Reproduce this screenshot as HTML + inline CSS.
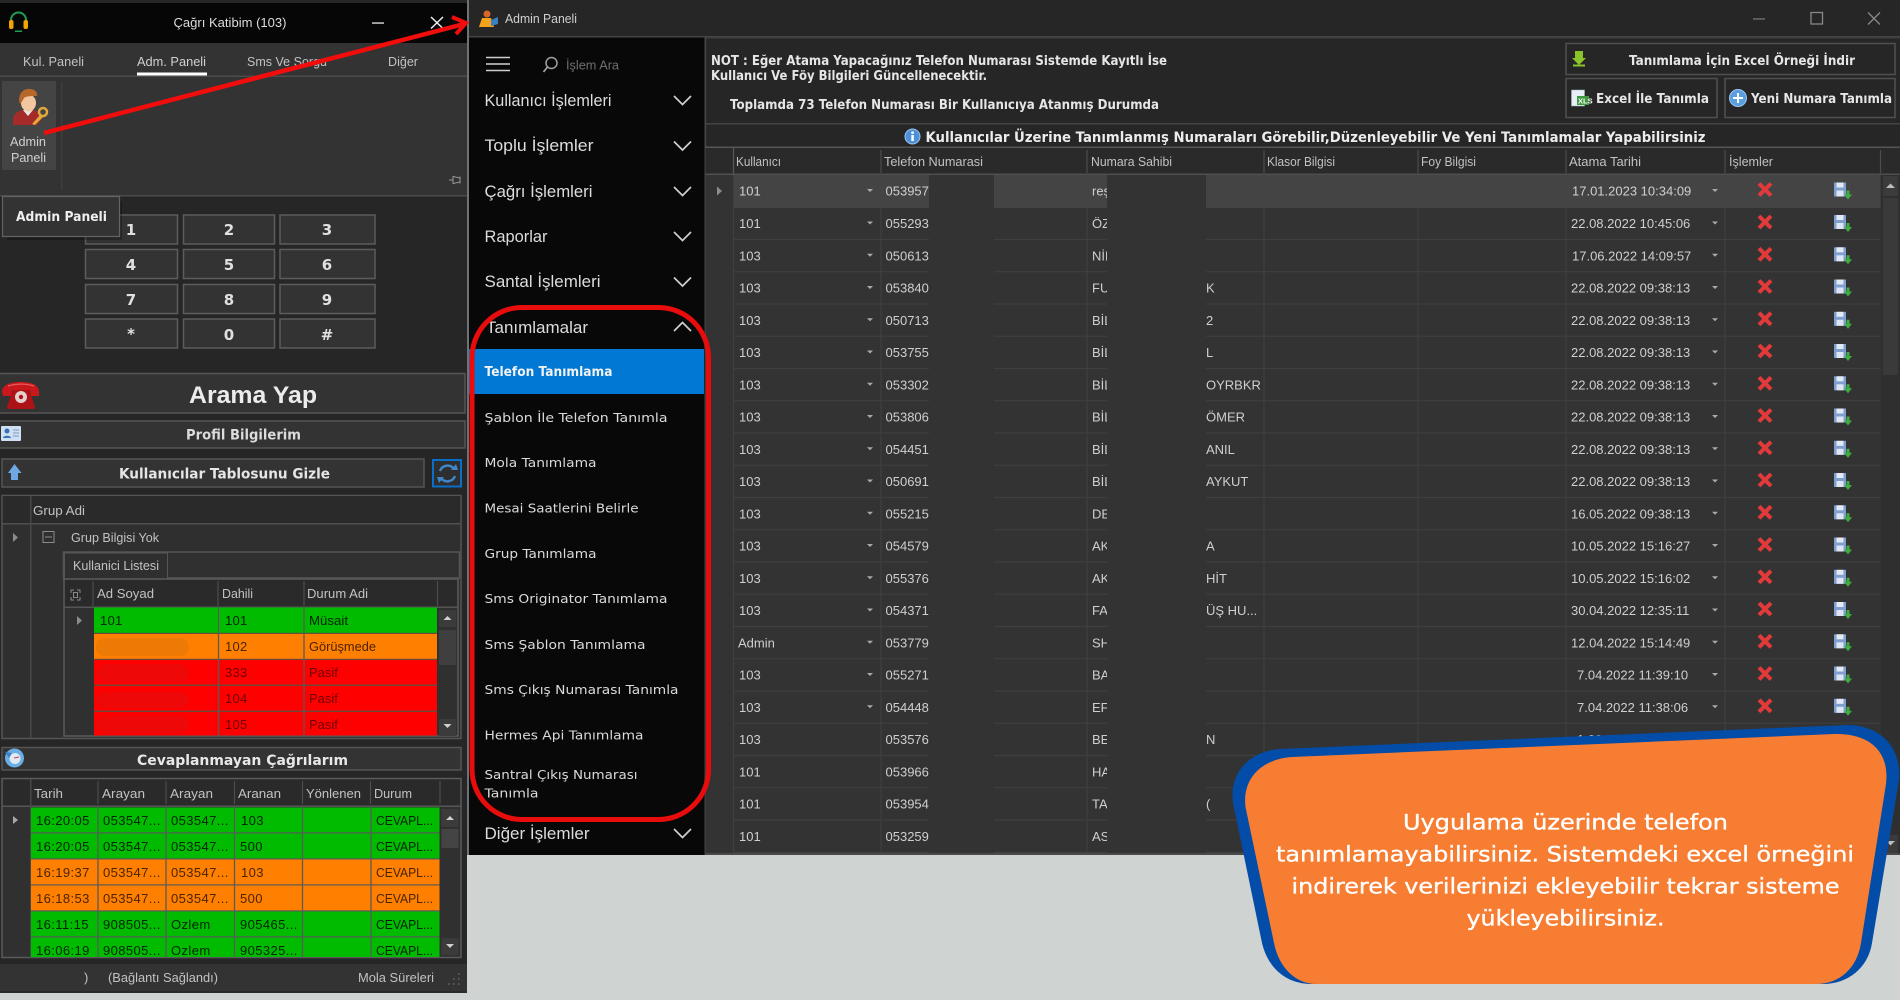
<!DOCTYPE html>
<html lang="tr"><head><meta charset="utf-8"><title>Admin Paneli</title>
<style>
html,body{margin:0;padding:0;background:#cfd3d2;overflow:hidden;width:1900px;height:1000px}
svg{display:block}
text{font-family:"Liberation Sans",sans-serif;font-size:13px;fill:#cdcdcd;white-space:pre}
.ui{filter:blur(.35px)}
.b{font-family:"DejaVu Sans",sans-serif;font-weight:700;font-size:13px;fill:#e6e6e6}
.k{font-family:"DejaVu Sans",sans-serif;font-weight:700;font-size:15px;fill:#e0e0e0;text-anchor:middle}
.m{font-size:17px;fill:#dcdcdc}
.s{font-family:"DejaVu Sans",sans-serif;font-size:12.5px;fill:#dadada}
.h{fill:#c2c2c2}
.d{fill:#cfcfcf;font-size:13px}
.g{fill:#012401;letter-spacing:.4px}
.o{fill:#4a2400;letter-spacing:.4px}
.r{fill:#6e0000;letter-spacing:.4px}
.w{font-family:"DejaVu Sans",sans-serif;font-size:21px;fill:#fff;stroke:#fff;stroke-width:.35px;text-anchor:start}
</style></head><body>
<svg width="1900" height="1000" viewBox="0 0 1900 1000" xmlns="http://www.w3.org/2000/svg">
<defs>
<g id="ri">
<path d="M867 -6.500h6l-3 3zM1712 -6.500h6l-3 3z" fill="#aaa"/>
<path d="M1759 -12l12 12M1771 -12l-12 12" stroke="#e23a3a" stroke-width="4" fill="none"/>
<rect x="1834" y="-13" width="12" height="14" fill="#7f9fd0"/><rect x="1836.500" y="-13" width="7" height="5" fill="#e4eaf4"/><rect x="1836.500" y="-5" width="7" height="6" fill="#dfe6f2"/>
<path d="M1844 -1h8l-4 5z M1846.500 -5h3v4h-3z" fill="#3fae3f"/>
</g>
<path id="cv" d="M674 -4l8.500 8.500l8.500-8.500" fill="none" stroke="#cfcfcf" stroke-width="1.700"/>
</defs>

<rect width="1900" height="1000" fill="#cfd3d2"/>

<g class="ui">
<!-- LEFT WINDOW -->
<rect x="0" y="0" width="467" height="993" fill="#262626"/>
<rect x="0" y="3" width="467" height="40" fill="#060606"/>
<path d="M11 22v-2a7.500 7.500 0 0 1 15 0v2" fill="none" stroke="#1d9e55" stroke-width="2"/>
<rect x="9" y="20" width="4.500" height="9" rx="2" fill="#f2a500"/><rect x="23.500" y="20" width="4.500" height="9" rx="2" fill="#f2a500"/>
<rect x="15" y="30.500" width="7" height="1.500" fill="#1d9e55"/>
<text x="173.500" y="27" textLength="113" lengthAdjust="spacingAndGlyphs" style="fill:#dcdcdc">Çağrı Katibim (103)</text>
<rect x="372" y="22.300" width="12" height="1.500" fill="#ccc"/>
<path d="M431 17l12 11.500M443 17l-12 11.500" stroke="#eee" stroke-width="1.500" fill="none"/>

<rect x="0" y="43" width="467" height="153" fill="#333"/>
<rect x="0" y="75.500" width="467" height="1.500" fill="#4b4b4b"/>
<rect x="0" y="195" width="467" height="1.500" fill="#4a4a4a"/>
<text class="h" x="23" y="66" textLength="61" lengthAdjust="spacingAndGlyphs">Kul. Paneli</text>
<text class="h" x="137" y="66" textLength="69" lengthAdjust="spacingAndGlyphs" style="fill:#d0d0d0">Adm. Paneli</text>
<rect x="137" y="72.500" width="70" height="3" fill="#fff"/>
<text class="h" x="247" y="66" textLength="80" lengthAdjust="spacingAndGlyphs">Sms Ve Sorgu</text>
<text class="h" x="388" y="66" textLength="30" lengthAdjust="spacingAndGlyphs">Diğer</text>

<rect x="2" y="81" width="54" height="89" fill="#444"/>
<rect x="61" y="82" width="1.500" height="108" fill="#3e3e3e"/>
<path d="M13 125v-6c0-5 5-8 10-9h10c4 1 8 4 9 9l-5 6z" fill="#a52b2b"/>
<path d="M23 110l5 6 5-6z" fill="#e8e8e8"/>
<ellipse cx="28.500" cy="103" rx="7.500" ry="8.500" fill="#f2c7a0"/>
<path d="M20 104c-3-9 3-16 10-15 5 0 8 4 7 7-5 0-11 0-13 2-1 2-2 4-4 6z" fill="#b8672a"/>
<circle cx="43" cy="112" r="4" fill="none" stroke="#e0a93a" stroke-width="2.500"/><path d="M40 115l-8 9 3 1 8-8" fill="#e0a93a"/>
<text class="h" x="10" y="146" textLength="36" lengthAdjust="spacingAndGlyphs" style="fill:#d0d0d0">Admin</text>
<text class="h" x="11" y="162" textLength="35" lengthAdjust="spacingAndGlyphs" style="fill:#d0d0d0">Paneli</text>
<path d="M449 180h4M453 176.500v7l7-1.500v-4zM460 176.500v7" stroke="#999" stroke-width="1" fill="none"/>

<!-- keypad -->
<g fill="#333" stroke="#5c5c5c" stroke-width="1.500">
<rect x="85.500" y="215" width="92" height="29"/><rect x="183.500" y="215" width="91" height="29"/><rect x="280" y="215" width="95" height="29"/>
<rect x="85.500" y="249.500" width="92" height="29"/><rect x="183.500" y="249.500" width="91" height="29"/><rect x="280" y="249.500" width="95" height="29"/>
<rect x="85.500" y="284.500" width="92" height="29"/><rect x="183.500" y="284.500" width="91" height="29"/><rect x="280" y="284.500" width="95" height="29"/>
<rect x="85.500" y="319" width="92" height="29"/><rect x="183.500" y="319" width="91" height="29"/><rect x="280" y="319" width="95" height="29"/>
</g>
<text class="k" x="131" y="235">1</text><text class="k" x="229" y="235">2</text><text class="k" x="327" y="235">3</text>
<text class="k" x="131" y="270">4</text><text class="k" x="229" y="270">5</text><text class="k" x="327" y="270">6</text>
<text class="k" x="131" y="305">7</text><text class="k" x="229" y="305">8</text><text class="k" x="327" y="305">9</text>
<text class="k" x="131" y="339">*</text><text class="k" x="229" y="340">0</text><text class="k" x="327" y="340">#</text>

<!-- tooltip -->
<rect x="7" y="201" width="115" height="39" fill="#000" opacity=".25"/>
<rect x="2.500" y="196.500" width="117" height="40" fill="#333" stroke="#636363" stroke-width="1.200"/>
<text class="b" x="16" y="221" textLength="91" lengthAdjust="spacingAndGlyphs" style="fill:#f0f0f0">Admin Paneli</text>

<!-- bars -->
<rect x="-2" y="373.500" width="467" height="39.500" fill="#333" stroke="#555" stroke-width="1.500"/>
<path d="M13 389h16l6 18c0 2-1 2-3 2H10c-2 0-3 0-3-2z" fill="#ad1216"/>
<path d="M2 392C2 384 12 382 21 382C30 382 39 384 39 392L39 396L31 396L30 390L12 390L11 396L3 396Z" fill="#c8181c"/>
<path d="M8 386c8-2.500 18-2.500 26 0" stroke="#e85a5a" stroke-width="1.200" fill="none"/>
<circle cx="21" cy="397" r="6" fill="#e3cfcf"/><circle cx="21" cy="397" r="2.200" fill="#ad1216"/>
<text x="189" y="403" textLength="128" lengthAdjust="spacingAndGlyphs" style="font-size:24px;font-weight:700;fill:#ececec">Arama Yap</text>

<rect x="-2" y="421" width="467" height="27" fill="#333" stroke="#555" stroke-width="1.500"/>
<rect x="1" y="426" width="20" height="15" rx="1" fill="#cfe0f5"/><circle cx="7" cy="431" r="2.500" fill="#3a6fb5"/><path d="M3 438c0-3 8-3 8 0z" fill="#3a6fb5"/><path d="M13 430h6M13 433h6M13 436h6" stroke="#7c98bf" stroke-width="1"/>
<text class="b" x="186" y="439.500" textLength="115" lengthAdjust="spacingAndGlyphs" style="font-size:14px;fill:#dcdcdc">Profil Bilgilerim</text>

<rect x="2" y="459" width="422" height="28" fill="#333" stroke="#555" stroke-width="1.500"/>
<path d="M14.500 464l7 9h-3.500v7h-7v-7H8z" fill="#6ea9e6"/>
<text class="b" x="119" y="478.500" textLength="211" lengthAdjust="spacingAndGlyphs" style="font-size:14px;fill:#e6e6e6">Kullanıcılar Tablosunu Gizle</text>
<rect x="433" y="460" width="28" height="26.500" fill="#2e2e2e" stroke="#0a6fc8" stroke-width="2"/>
<path d="M440 471a8 8 0 0 1 14-2M455 476a8 8 0 0 1-14 2" fill="none" stroke="#3f86c8" stroke-width="2.500"/><path d="M451 470h7l-2-6zM444 477h-7l2 6z" fill="#3f86c8"/>

<!-- group table -->
<rect x="2" y="495.500" width="459" height="243" fill="#2f2f2f" stroke="#555" stroke-width="1.500"/>
<rect x="2.700" y="496" width="457.500" height="27" fill="#2a2a2a"/>
<rect x="2" y="523" width="459" height="1.500" fill="#505050"/>
<rect x="30" y="496" width="1.500" height="242" fill="#484848"/>
<text class="h" x="33" y="515" textLength="52" lengthAdjust="spacingAndGlyphs">Grup Adi</text>
<path d="M13 533l5 4.500-5 4.500z" fill="#8c8c8c"/>
<rect x="43" y="531.500" width="11" height="11" fill="none" stroke="#8c8c8c"/><path d="M45 537h7" stroke="#8c8c8c"/>
<text class="h" x="71" y="542" textLength="88" lengthAdjust="spacingAndGlyphs">Grup Bilgisi Yok</text>
<rect x="63.500" y="552" width="396" height="26" fill="#303030" stroke="#555" stroke-width="1.500"/>
<rect x="64.500" y="553" width="103" height="27" fill="#2f2f2f" stroke="#555"/>
<rect x="65" y="576" width="102" height="4" fill="#2f2f2f"/>
<text class="h" x="73" y="570" textLength="86" lengthAdjust="spacingAndGlyphs">Kullanici Listesi</text>
<rect x="64" y="579" width="394" height="157" fill="#303030" stroke="#5a5a5a" stroke-width="1.500"/>
<rect x="65" y="580" width="392" height="26.500" fill="#2a2a2a"/>
<rect x="64" y="606.500" width="394" height="1.500" fill="#555"/>
<path d="M93 581v25M218 581v25M304 581v25M437.500 581v25" stroke="#4d4d4d" stroke-width="1.200"/>
<path d="M71 593v-3h3M77 590h3v3M80 597v3h-3M74 600h-3v-3" fill="none" stroke="#8a8a8a"/><rect x="73.500" y="592.500" width="4" height="5" fill="none" stroke="#8a8a8a"/>
<text class="h" x="97" y="598" textLength="57" lengthAdjust="spacingAndGlyphs">Ad Soyad</text>
<text class="h" x="222" y="598" textLength="31" lengthAdjust="spacingAndGlyphs">Dahili</text>
<text class="h" x="307" y="598" textLength="61" lengthAdjust="spacingAndGlyphs">Durum Adi</text>
<path d="M77 616l5 4.500-5 4.500z" fill="#8c8c8c"/>
<rect x="94" y="607.500" width="343" height="128" fill="#6a4a3a"/>
<rect x="94" y="607.500" width="343" height="25.300" fill="#00bb00"/>
<rect x="94" y="634" width="343" height="24.800" fill="#ff7f00"/>
<rect x="94" y="660" width="343" height="24.600" fill="#f00"/>
<rect x="94" y="686" width="343" height="24.600" fill="#f00"/>
<rect x="94" y="712" width="343" height="23.500" fill="#f00"/>
<path d="M218.500 607v129M304 607v129" stroke="#5a5a5a" stroke-width="1.300"/>
<rect x="96" y="638" width="93" height="18" rx="9" fill="#ec7a05"/>
<rect x="96" y="664" width="93" height="18" rx="9" fill="#ee0808"/>
<rect x="96" y="692" width="93" height="16" rx="8" fill="#ee0808"/>
<rect x="96" y="716" width="93" height="17" rx="8.500" fill="#ee0808"/>
<text class="g" x="100" y="625" style="letter-spacing:.3px">101</text><text class="g" x="225" y="625" style="letter-spacing:.3px">101</text><text class="g" x="309" y="625" textLength="39" lengthAdjust="spacingAndGlyphs" style="letter-spacing:0">Müsait</text>
<text class="o" x="225" y="651" style="letter-spacing:.3px">102</text><text class="o" x="309" y="651" textLength="67" lengthAdjust="spacingAndGlyphs" style="letter-spacing:0">Görüşmede</text>
<text class="r" x="225" y="677" style="letter-spacing:.3px">333</text><text class="r" x="309" y="677" style="letter-spacing:0">Pasif</text>
<text class="r" x="225" y="703" style="letter-spacing:.3px">104</text><text class="r" x="309" y="703" style="letter-spacing:0">Pasif</text>
<text class="r" x="225" y="729" style="letter-spacing:.3px">105</text><text class="r" x="309" y="729" style="letter-spacing:0">Pasif</text>
<rect x="439" y="610" width="17" height="17" fill="#3b3b3b"/><path d="M443.500 620l4-4 4 4z" fill="#cfcfcf"/>
<rect x="439" y="630" width="17" height="35" fill="#3f3f3f"/>
<rect x="439" y="719" width="17" height="17" fill="#3b3b3b"/><path d="M443.500 724l4 4 4-4z" fill="#cfcfcf"/>

<!-- missed calls -->
<rect x="2" y="747.500" width="459" height="22.500" fill="#333" stroke="#555" stroke-width="1.500"/>
<circle cx="14.500" cy="758" r="9.500" fill="#6aaee6"/><circle cx="15" cy="758.500" r="5.500" fill="#dfeaf5"/><path d="M5 752l7 1-3 5z" fill="#3a7fc0"/><path d="M14 758l5-1" stroke="#c44" stroke-width="1"/>
<text class="b" x="137" y="765" textLength="211" lengthAdjust="spacingAndGlyphs" style="font-size:14px;fill:#e8e8e8">Cevaplanmayan Çağrılarım</text>

<rect x="2" y="778.500" width="459" height="179" fill="#303030" stroke="#5a5a5a" stroke-width="1.500"/>
<rect x="3" y="779.500" width="457" height="26" fill="#2a2a2a"/>
<rect x="2" y="805.500" width="459" height="1.500" fill="#555"/>
<rect x="30" y="779" width="1.500" height="178" fill="#484848"/>
<path d="M98 781v23M166 781v23M234.500 781v23M302.500 781v23M370.500 781v23M440 781v23" stroke="#4d4d4d" stroke-width="1.200"/>
<text class="h" x="34" y="798" textLength="29" lengthAdjust="spacingAndGlyphs">Tarih</text>
<text class="h" x="102" y="798" textLength="43" lengthAdjust="spacingAndGlyphs">Arayan</text>
<text class="h" x="170" y="798" textLength="43" lengthAdjust="spacingAndGlyphs">Arayan</text>
<text class="h" x="238" y="798" textLength="43" lengthAdjust="spacingAndGlyphs">Aranan</text>
<text class="h" x="306" y="798" textLength="55" lengthAdjust="spacingAndGlyphs">Yönlenen</text>
<text class="h" x="374" y="798" textLength="38" lengthAdjust="spacingAndGlyphs">Durum</text>
<path d="M13 816l5 4-5 4z" fill="#a8a8a8"/>
<rect x="31" y="807.500" width="408.500" height="149.500" fill="#5a5a5a"/>
<rect x="31" y="807.500" width="408.500" height="24.800" fill="#00bb00"/>
<rect x="31" y="833.500" width="408.500" height="24.800" fill="#00bb00"/>
<rect x="31" y="859.500" width="408.500" height="24.800" fill="#ff7f00"/>
<rect x="31" y="885.500" width="408.500" height="24.800" fill="#ff7f00"/>
<rect x="31" y="911.500" width="408.500" height="24.800" fill="#00bb00"/>
<rect x="31" y="937.500" width="408.500" height="19.500" fill="#00bb00"/>
<path d="M98 807v150M166 807v150M234.500 807v150M302.500 807v150M371 807v150" stroke="#5a5a5a" stroke-width="1.300"/>
<text class="g" x="36" y="825">16:20:05</text><text class="g" x="103" y="825">053547...</text><text class="g" x="171" y="825">053547...</text><text class="g" x="241" y="825">103</text><text class="g" x="376" y="825" textLength="57" lengthAdjust="spacingAndGlyphs" style="letter-spacing:0">CEVAPL...</text>
<text class="g" x="36" y="851">16:20:05</text><text class="g" x="103" y="851">053547...</text><text class="g" x="171" y="851">053547...</text><text class="g" x="240" y="851">500</text><text class="g" x="376" y="851" textLength="57" lengthAdjust="spacingAndGlyphs" style="letter-spacing:0">CEVAPL...</text>
<text class="o" x="36" y="877">16:19:37</text><text class="o" x="103" y="877">053547...</text><text class="o" x="171" y="877">053547...</text><text class="o" x="241" y="877">103</text><text class="o" x="376" y="877" textLength="57" lengthAdjust="spacingAndGlyphs" style="letter-spacing:0">CEVAPL...</text>
<text class="o" x="36" y="903">16:18:53</text><text class="o" x="103" y="903">053547...</text><text class="o" x="171" y="903">053547...</text><text class="o" x="240" y="903">500</text><text class="o" x="376" y="903" textLength="57" lengthAdjust="spacingAndGlyphs" style="letter-spacing:0">CEVAPL...</text>
<text class="g" x="36" y="929">16:11:15</text><text class="g" x="103" y="929">908505...</text><text class="g" x="171" y="929">Ozlem</text><text class="g" x="240" y="929">905465...</text><text class="g" x="376" y="929" textLength="57" lengthAdjust="spacingAndGlyphs" style="letter-spacing:0">CEVAPL...</text>
<text class="g" x="36" y="955">16:06:19</text><text class="g" x="103" y="955">908505...</text><text class="g" x="171" y="955">Ozlem</text><text class="g" x="240" y="955">905325...</text><text class="g" x="376" y="955" textLength="57" lengthAdjust="spacingAndGlyphs" style="letter-spacing:0">CEVAPL...</text>
<rect x="441.500" y="809" width="17" height="18" fill="#3b3b3b"/><path d="M446 820l4-4 4 4z" fill="#cfcfcf"/>
<rect x="441.500" y="829" width="17" height="19" fill="#444"/>
<rect x="441.500" y="938" width="17" height="17" fill="#3b3b3b"/><path d="M446 944l4 4 4-4z" fill="#cfcfcf"/>

<!-- status bar -->
<rect x="0" y="964" width="467" height="29" fill="#333"/>
<rect x="0" y="991" width="467" height="2" fill="#2a2a2a"/>
<text class="h" x="84" y="982">)</text>
<text class="h" x="108" y="982" textLength="110" lengthAdjust="spacingAndGlyphs">(Bağlantı Sağlandı)</text>
<text class="h" x="358" y="982" textLength="76" lengthAdjust="spacingAndGlyphs">Mola Süreleri</text>
<path d="M458 974h1.500M458 979h1.500M453 979h1.500M458 984h1.500M453 984h1.500M448 984h1.500" stroke="#666" stroke-width="1.500"/>

<!-- RIGHT WINDOW -->
<rect x="467" y="0" width="2" height="855" fill="#6d7278"/>
<rect x="469" y="0" width="1431" height="855" fill="#262626"/>
<rect x="469" y="36" width="1431" height="1.500" fill="#444"/>
<circle cx="487" cy="14" r="3.500" fill="#d8662a"/><path d="M479 27l3-9h9l3 9z" fill="#f2a21c"/><path d="M491 20l7-3v7l-7 2z" fill="#3a7fc0"/>
<text x="505" y="23" textLength="72" lengthAdjust="spacingAndGlyphs" style="fill:#d0d0d0">Admin Paneli</text>
<rect x="1753" y="18.300" width="12" height="1.300" fill="#777"/>
<rect x="1811" y="12.500" width="11.500" height="11.500" fill="none" stroke="#888" stroke-width="1.300"/>
<path d="M1868 12.500l12 12M1880 12.500l-12 12" stroke="#888" stroke-width="1.300" fill="none"/>

<!-- sidebar -->
<rect x="469" y="37.500" width="235" height="817.500" fill="#080808"/>
<path d="M486 57.500h24M486 64h24M486 70.500h24" stroke="#cfcfcf" stroke-width="1.500"/>
<circle cx="551.500" cy="63" r="5.500" fill="none" stroke="#a0a0a0" stroke-width="1.500"/><path d="M547.500 67l-4 5" stroke="#a0a0a0" stroke-width="1.800"/>
<text x="566" y="69.500" textLength="53" lengthAdjust="spacingAndGlyphs" style="fill:#6f6f6f">İşlem Ara</text>
<text class="m" x="484.500" y="106" textLength="127" lengthAdjust="spacingAndGlyphs">Kullanıcı İşlemleri</text>
<text class="m" x="484.500" y="151" textLength="109" lengthAdjust="spacingAndGlyphs">Toplu İşlemler</text>
<text class="m" x="484.500" y="197" textLength="108" lengthAdjust="spacingAndGlyphs">Çağrı İşlemleri</text>
<text class="m" x="484.500" y="242" textLength="63" lengthAdjust="spacingAndGlyphs">Raporlar</text>
<text class="m" x="484.500" y="287" textLength="116" lengthAdjust="spacingAndGlyphs">Santal İşlemleri</text>
<text class="m" x="486" y="333" textLength="102" lengthAdjust="spacingAndGlyphs">Tanımlamalar</text>
<text class="m" x="484.500" y="839" textLength="105" lengthAdjust="spacingAndGlyphs">Diğer İşlemler</text>
<use href="#cv" y="100"/><use href="#cv" y="145.500"/><use href="#cv" y="191"/><use href="#cv" y="236"/><use href="#cv" y="281.500"/><use href="#cv" y="833"/>
<path d="M674 331l8.500-8.500l8.500 8.500" fill="none" stroke="#cfcfcf" stroke-width="1.700"/>
<rect x="469" y="349" width="235" height="45" fill="#0078d4"/>
<text class="b" x="484.500" y="376" textLength="128" lengthAdjust="spacingAndGlyphs" style="fill:#f2f2f2">Telefon Tanımlama</text>
<text class="s" x="484.500" y="422" textLength="183" lengthAdjust="spacingAndGlyphs">Şablon İle Telefon Tanımla</text>
<text class="s" x="484.500" y="467" textLength="112" lengthAdjust="spacingAndGlyphs">Mola Tanımlama</text>
<text class="s" x="484.500" y="512.500" textLength="154" lengthAdjust="spacingAndGlyphs">Mesai Saatlerini Belirle</text>
<text class="s" x="484.500" y="558" textLength="112" lengthAdjust="spacingAndGlyphs">Grup Tanımlama</text>
<text class="s" x="484.500" y="603" textLength="183" lengthAdjust="spacingAndGlyphs">Sms Originator Tanımlama</text>
<text class="s" x="484.500" y="649" textLength="161" lengthAdjust="spacingAndGlyphs">Sms Şablon Tanımlama</text>
<text class="s" x="484.500" y="694" textLength="194" lengthAdjust="spacingAndGlyphs">Sms Çıkış Numarası Tanımla</text>
<text class="s" x="484.500" y="739.500" textLength="159" lengthAdjust="spacingAndGlyphs">Hermes Api Tanımlama</text>
<text class="s" x="484.500" y="779" textLength="153" lengthAdjust="spacingAndGlyphs">Santral Çıkış Numarası</text>
<text class="s" x="484.500" y="797.500" textLength="54" lengthAdjust="spacingAndGlyphs">Tanımla</text>

<!-- main header -->
<rect x="705" y="37.500" width="1195" height="1" fill="#3a3a3a"/>
<rect x="705" y="37" width="1.200" height="818" fill="#474747"/>
<rect x="705" y="123" width="1195" height="1.500" fill="#444"/>
<rect x="705" y="146.500" width="1195" height="1.500" fill="#555"/>
<text class="b" x="711" y="65" textLength="456" lengthAdjust="spacingAndGlyphs">NOT : Eğer Atama Yapacağınız Telefon Numarası Sistemde Kayıtlı İse</text>
<text class="b" x="711" y="80" textLength="276" lengthAdjust="spacingAndGlyphs">Kullanıcı Ve Föy Bilgileri Güncellenecektir.</text>
<text class="b" x="730" y="109" textLength="429" lengthAdjust="spacingAndGlyphs">Toplamda 73 Telefon Numarası Bir Kullanıcıya Atanmış Durumda</text>

<rect x="1566" y="43.500" width="329" height="31" fill="#262626" stroke="#505050" stroke-width="1.500"/>
<path d="M1575 51h8v7h3l-7 7-7-7h3z" fill="#8bc32a"/><rect x="1573" y="64.500" width="12" height="2" fill="#8bc32a"/>
<text class="b" x="1629" y="65" textLength="226" lengthAdjust="spacingAndGlyphs">Tanımlama İçin Excel Örneği İndir</text>
<rect x="1566" y="78.500" width="151" height="39" fill="#262626" stroke="#505050" stroke-width="1.500"/>
<rect x="1571.500" y="90" width="13" height="16" fill="#e8eef6" stroke="#9bb" stroke-width=".5"/><rect x="1577" y="96" width="12" height="9" fill="#3f9a3f"/>
<text x="1578" y="103.500" style="font-size:7.500px;fill:#fff;font-weight:700">XLS</text>
<text class="b" x="1596" y="103" textLength="113" lengthAdjust="spacingAndGlyphs">Excel İle Tanımla</text>
<rect x="1725" y="78.500" width="170" height="39" fill="#262626" stroke="#505050" stroke-width="1.500"/>
<circle cx="1738" cy="98" r="8.500" fill="#5a9fe0" stroke="#9cc6ee"/><path d="M1733 98h10M1738 93v10" stroke="#fff" stroke-width="2"/>
<text class="b" x="1751" y="103" textLength="141" lengthAdjust="spacingAndGlyphs">Yeni Numara Tanımla</text>

<circle cx="912.500" cy="136.500" r="7.500" fill="#4d8fd8" stroke="#9cc6ee"/><rect x="911.300" y="135" width="2.500" height="6" fill="#fff"/><rect x="911.300" y="131.500" width="2.500" height="2.300" fill="#fff"/>
<text class="b" x="925.500" y="142" textLength="780" lengthAdjust="spacingAndGlyphs" style="font-size:14px;fill:#ececec">Kullanıcılar Üzerine Tanımlanmış Numaraları Görebilir,Düzenleyebilir Ve Yeni Tanımlamalar Yapabilirsiniz</text>

<!-- grid -->
<rect x="705.500" y="148" width="1194.500" height="707" fill="#333"/>
<rect x="705.500" y="148" width="1194.500" height="26" fill="#2a2a2a"/>
<rect x="705.500" y="173.500" width="1194.500" height="1.500" fill="#4f4f4f"/>
<path d="M733.500 148v26" stroke="#585858" stroke-width="1.300"/>
<path d="M881 150v23M1087 150v23M1264 150v23M1418 150v23M1566 150v23M1725 150v23M1880.500 150v23" stroke="#4d4d4d" stroke-width="1.200"/>
<text class="h" x="736" y="166" textLength="45" lengthAdjust="spacingAndGlyphs">Kullanıcı</text>
<text class="h" x="884" y="166" textLength="99" lengthAdjust="spacingAndGlyphs">Telefon Numarasi</text>
<text class="h" x="1091" y="166" textLength="81" lengthAdjust="spacingAndGlyphs">Numara Sahibi</text>
<text class="h" x="1267" y="166" textLength="68" lengthAdjust="spacingAndGlyphs">Klasor Bilgisi</text>
<text class="h" x="1421" y="166" textLength="55" lengthAdjust="spacingAndGlyphs">Foy Bilgisi</text>
<text class="h" x="1569" y="166" textLength="72" lengthAdjust="spacingAndGlyphs">Atama Tarihi</text>
<text class="h" x="1729" y="166" textLength="44" lengthAdjust="spacingAndGlyphs">İşlemler</text>

<path d="M733.500 175v680" stroke="#404040" stroke-width="1.300"/>
<path d="M881 175v680M1087 175v680M1264 175v680M1418 175v680M1566 175v680M1725 175v680" stroke="#3f3f3f" stroke-width="1.200"/>
<g stroke="#3f3f3f" stroke-width="1.200">
<path d="M733 239.500h1147M733 271.700h1147M733 304h1147M733 336.200h1147M733 368.500h1147M733 400.700h1147M733 433h1147M733 465.200h1147M733 497.500h1147M733 529.700h1147M733 562h1147M733 594.200h1147M733 626.500h1147M733 658.700h1147M733 691h1147M733 723.200h1147M733 755.500h1147M733 787.700h1147M733 820h1147M733 852.500h1147"/>
</g>
<rect x="734" y="175" width="1146.500" height="33" fill="#444"/>
<path d="M717 186.500l5 4.500-5 4.500z" fill="#8c8c8c"/>

<g class="d">
<g transform="translate(0,195.500)"><text class="d" x="739">101</text><text class="d" x="885.500">053957</text><text class="d" x="1092">reş</text><text class="d" x="1572">17.01.2023 10:34:09</text><use href="#ri"/></g>
<g transform="translate(0,228)"><text class="d" x="739">101</text><text class="d" x="885.500">055293</text><text class="d" x="1092">ÖZ</text><text class="d" x="1571">22.08.2022 10:45:06</text><use href="#ri"/></g>
<g transform="translate(0,260.300)"><text class="d" x="739">103</text><text class="d" x="885.500">050613</text><text class="d" x="1092">NİL</text><text class="d" x="1572">17.06.2022 14:09:57</text><use href="#ri"/></g>
<g transform="translate(0,292.500)"><text class="d" x="739">103</text><text class="d" x="885.500">053840</text><text class="d" x="1092">FU</text><text class="d" x="1571">22.08.2022 09:38:13</text><use href="#ri"/></g>
<g transform="translate(0,324.800)"><text class="d" x="739">103</text><text class="d" x="885.500">050713</text><text class="d" x="1092">BİL</text><text class="d" x="1571">22.08.2022 09:38:13</text><use href="#ri"/></g>
<g transform="translate(0,357)"><text class="d" x="739">103</text><text class="d" x="885.500">053755</text><text class="d" x="1092">BİL</text><text class="d" x="1571">22.08.2022 09:38:13</text><use href="#ri"/></g>
<g transform="translate(0,389.300)"><text class="d" x="739">103</text><text class="d" x="885.500">053302</text><text class="d" x="1092">BİL</text><text class="d" x="1571">22.08.2022 09:38:13</text><use href="#ri"/></g>
<g transform="translate(0,421.500)"><text class="d" x="739">103</text><text class="d" x="885.500">053806</text><text class="d" x="1092">BİL</text><text class="d" x="1571">22.08.2022 09:38:13</text><use href="#ri"/></g>
<g transform="translate(0,453.800)"><text class="d" x="739">103</text><text class="d" x="885.500">054451</text><text class="d" x="1092">BİL</text><text class="d" x="1571">22.08.2022 09:38:13</text><use href="#ri"/></g>
<g transform="translate(0,486)"><text class="d" x="739">103</text><text class="d" x="885.500">050691</text><text class="d" x="1092">BİL</text><text class="d" x="1571">22.08.2022 09:38:13</text><use href="#ri"/></g>
<g transform="translate(0,518.300)"><text class="d" x="739">103</text><text class="d" x="885.500">055215</text><text class="d" x="1092">DE</text><text class="d" x="1571">16.05.2022 09:38:13</text><use href="#ri"/></g>
<g transform="translate(0,550.500)"><text class="d" x="739">103</text><text class="d" x="885.500">054579</text><text class="d" x="1092">AK</text><text class="d" x="1571">10.05.2022 15:16:27</text><use href="#ri"/></g>
<g transform="translate(0,582.800)"><text class="d" x="739">103</text><text class="d" x="885.500">055376</text><text class="d" x="1092">AK</text><text class="d" x="1571">10.05.2022 15:16:02</text><use href="#ri"/></g>
<g transform="translate(0,615)"><text class="d" x="739">103</text><text class="d" x="885.500">054371</text><text class="d" x="1092">FA</text><text class="d" x="1571">30.04.2022 12:35:11</text><use href="#ri"/></g>
<g transform="translate(0,647.300)"><text class="d" x="738">Admin</text><text class="d" x="885.500">053779</text><text class="d" x="1092">SH</text><text class="d" x="1571">12.04.2022 15:14:49</text><use href="#ri"/></g>
<g transform="translate(0,679.500)"><text class="d" x="739">103</text><text class="d" x="885.500">055271</text><text class="d" x="1092">BA</text><text class="d" x="1577">7.04.2022 11:39:10</text><use href="#ri"/></g>
<g transform="translate(0,711.800)"><text class="d" x="739">103</text><text class="d" x="885.500">054448</text><text class="d" x="1092">EFİ</text><text class="d" x="1577">7.04.2022 11:38:06</text><use href="#ri"/></g>
<g transform="translate(0,744)"><text class="d" x="739">103</text><text class="d" x="885.500">053576</text><text class="d" x="1092">BEI</text><text class="d" x="1577">1.03.2022</text></g>
<g transform="translate(0,776.300)"><text class="d" x="739">101</text><text class="d" x="885.500">053966</text><text class="d" x="1092">HA</text></g>
<g transform="translate(0,808.500)"><text class="d" x="739">101</text><text class="d" x="885.500">053954</text><text class="d" x="1092">TA</text></g>
<g transform="translate(0,840.800)"><text class="d" x="739">101</text><text class="d" x="885.500">053259</text><text class="d" x="1092">AS</text></g>
</g>
<rect x="929" y="175" width="65" height="680" fill="#333"/>
<rect x="1107" y="175" width="99" height="680" fill="#333"/>
<g>
<text class="d" x="1206" y="292.500">K</text>
<text class="d" x="1206" y="324.800">2</text>
<text class="d" x="1206" y="357">L</text>
<text class="d" x="1206" y="389.300">OYRBKR</text>
<text class="d" x="1206" y="421.500">ÖMER</text>
<text class="d" x="1206" y="453.800">ANIL</text>
<text class="d" x="1206" y="486">AYKUT</text>
<text class="d" x="1206" y="550.500">A</text>
<text class="d" x="1206" y="582.800">HİT</text>
<text class="d" x="1206" y="615">ÜŞ HU...</text>
<text class="d" x="1206" y="744">N</text>
<text class="d" x="1206" y="808.500">(</text>
</g>
<!-- right scrollbar -->
<rect x="1881" y="175" width="19" height="680" fill="#2f2f2f"/>
<rect x="1883" y="176" width="15" height="20" fill="#3b3b3b"/><path d="M1886 188l4.500-4.500 4.500 4.500z" fill="#bdbdbd"/>
<rect x="1883" y="198" width="15" height="177" fill="#3a3a3a"/>
<rect x="1883" y="835" width="15" height="18" fill="#3b3b3b"/><path d="M1886 841l4.500 4.500 4.500-4.500z" fill="#bdbdbd"/>
<rect x="705" y="853" width="1195" height="2" fill="#4a4a4a"/>
</g>

<!-- red arrow -->
<path d="M44 133L464 24" stroke="#f20d0d" stroke-width="4.500" fill="none"/>
<path d="M452 17l14 6-10 11" stroke="#f20d0d" stroke-width="4" fill="none"/>

<!-- red outline -->
<rect x="472" y="307.500" width="236.500" height="512" rx="50" ry="50" fill="none" stroke="#e80c0c" stroke-width="5"/>

<!-- blob -->
<path d="M1280 749L1847 725C1878 725 1902 745 1899 780L1872 943C1868 968 1848 984 1823 984H1312C1286 984 1268 968 1262 943L1233 803C1229 772 1250 751 1280 749Z" fill="#034ca8"/>
<path d="M1292 757L1834 734C1868 733 1890 750 1886 784L1861 943C1857 968 1840 984 1816 984H1316C1296 984 1279 968 1274 943L1245.500 807C1242 778 1262 759 1292 757Z" fill="#f77d32"/>
<text class="w" x="1403" y="829.500" textLength="325" lengthAdjust="spacingAndGlyphs">Uygulama üzerinde telefon</text>
<text class="w" x="1276" y="861.500" textLength="578" lengthAdjust="spacingAndGlyphs">tanımlamayabilirsiniz. Sistemdeki excel örneğini</text>
<text class="w" x="1291.500" y="893.500" textLength="548" lengthAdjust="spacingAndGlyphs">indirerek verilerinizi ekleyebilir tekrar sisteme</text>
<text class="w" x="1466.500" y="925.500" textLength="198" lengthAdjust="spacingAndGlyphs">yükleyebilirsiniz.</text>
</svg>
</body></html>
